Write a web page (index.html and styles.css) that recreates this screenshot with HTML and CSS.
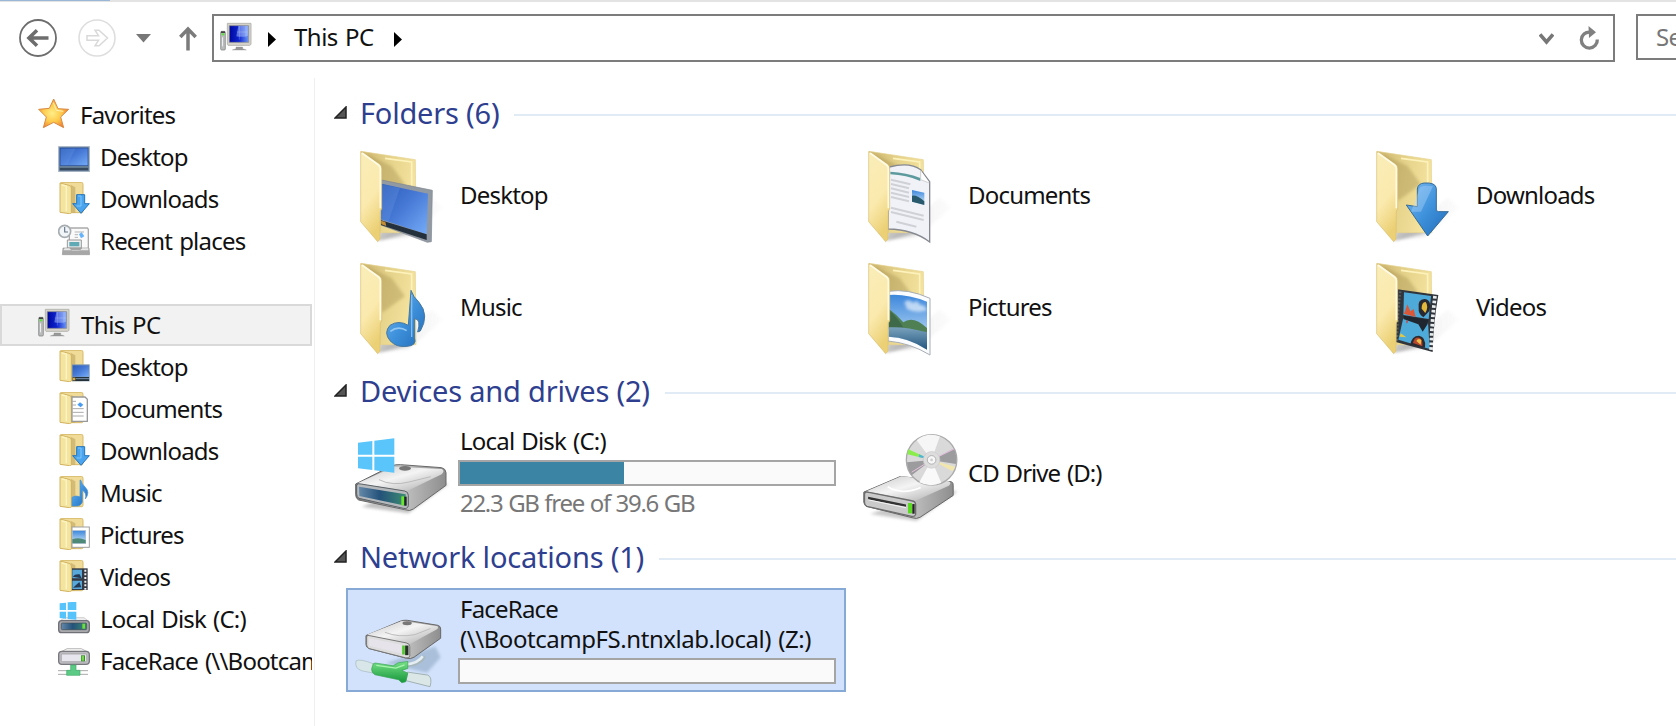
FILE: index.html
```html
<!DOCTYPE html>
<html lang="en">
<head>
<meta charset="utf-8">
<title>This PC</title>
<link rel="stylesheet" href="styles.css">
</head>
<body>
<svg class="defs" width="0" height="0" aria-hidden="true">
  <defs>
    <linearGradient id="front" x1="0" y1="0" x2="0.3" y2="1"><stop offset="0" stop-color="#f9edb8"/><stop offset=".6" stop-color="#fbeaae"/><stop offset="1" stop-color="#ebd075"/></linearGradient>
    <linearGradient id="back" x1="0" y1="0" x2="1" y2=".3"><stop offset="0" stop-color="#cdb56f"/><stop offset=".5" stop-color="#e5d28a"/><stop offset="1" stop-color="#f4e39e"/></linearGradient>
    <linearGradient id="shade" x1="0" y1="0" x2="1" y2="0"><stop offset="0" stop-color="#888" stop-opacity=".45"/><stop offset="1" stop-color="#bbb" stop-opacity="0.1"/></linearGradient>
    <linearGradient id="screen" x1="0" y1="0" x2="1" y2="1"><stop offset="0" stop-color="#2c5cb8"/><stop offset=".45" stop-color="#4577d4"/><stop offset="1" stop-color="#75acf8"/></linearGradient>
    <linearGradient id="blue" x1="0" y1="0" x2="1" y2="1"><stop offset="0" stop-color="#7cbcf0"/><stop offset=".5" stop-color="#3f92dc"/><stop offset="1" stop-color="#226bb8"/></linearGradient>
    <linearGradient id="metal" x1="0" y1="0" x2="1" y2="1"><stop offset="0" stop-color="#c6c6c6"/><stop offset=".45" stop-color="#f4f4f4"/><stop offset="1" stop-color="#a8a8a8"/></linearGradient>
    <linearGradient id="side" x1="0" y1="0" x2="1" y2="0"><stop offset="0" stop-color="#777"/><stop offset=".5" stop-color="#c4c4c4"/><stop offset="1" stop-color="#8e8e8e"/></linearGradient>
    <linearGradient id="glass" x1="0" y1="0" x2="1" y2="0"><stop offset="0" stop-color="#6488a8"/><stop offset=".45" stop-color="#24527a"/><stop offset="1" stop-color="#3c8a72"/></linearGradient>
    <linearGradient id="sky" x1="0" y1="0" x2="0" y2="1"><stop offset="0" stop-color="#3d87dc"/><stop offset="1" stop-color="#d6ecfa"/></linearGradient>
    <linearGradient id="sea" x1="0" y1="0" x2="0" y2="1"><stop offset="0" stop-color="#7aa3bd"/><stop offset="1" stop-color="#245680"/></linearGradient>
    <linearGradient id="pc" x1="0" y1="0" x2="1" y2="0"><stop offset="0" stop-color="#00089c"/><stop offset=".5" stop-color="#0d25d0"/><stop offset="1" stop-color="#6f9af4"/></linearGradient>
    <linearGradient id="cable" x1="0" y1="0" x2="0" y2="1"><stop offset="0" stop-color="#75e086"/><stop offset="1" stop-color="#16963a"/></linearGradient>
    <radialGradient id="gold" cx=".45" cy=".5" r=".55"><stop offset="0" stop-color="#ffee88"/><stop offset=".55" stop-color="#fdca4a"/><stop offset="1" stop-color="#ee8030"/></radialGradient>
    <filter id="soft" x="-30%" y="-30%" width="160%" height="160%"><feGaussianBlur stdDeviation="5"/></filter>

    <symbol id="fold-back" viewBox="84 165 300 300">
      <path d="M170 445L250 440L355 350L320 320Z" fill="url(#shade)" opacity=".45" filter="url(#soft)"/>
      <path d="M160 450L260 425L170 395Z" fill="#888" opacity=".5" filter="url(#soft)"/>
      <path d="M108 181L180 192L271 206L273 425L160 425Z" fill="url(#back)" stroke="#e6d28d" stroke-width="2"/>
      <path d="M180 202L260 213V360" fill="none" stroke="#fdf2bb" stroke-width="5"/>
      <path d="M125 190L200 225L240 280L170 330Z" fill="#8f7a38" opacity=".3" filter="url(#soft)"/>
    </symbol>
    <symbol id="fold-front" viewBox="84 165 300 300">
      <path d="M107 182L163 220Q170 224 170 232V354L166 360L165 445L158 452L107 392Z" fill="url(#front)" stroke="#d9be72" stroke-width="2"/>
      <path d="M111 186L161 222Q166 226 166 234V352" fill="none" stroke="#fffbe6" stroke-width="5"/>
    </symbol>
    <symbol id="mini-fold" viewBox="0 0 96 96">
      <path d="M8 3Q8 1 11 1H70Q75 1 75 7V88Q75 92 71 92H30L8 90Z" fill="#f0dc98" stroke="#d8b968" stroke-width="3"/>
      <path d="M38 8L52 16V92H38Z" fill="#bfa560" opacity=".6"/>
      <path d="M6 3L33 10Q40 12 40 18V93Q38 96 34 95L6 91Z" fill="#f3e5a0" stroke="#d2b462" stroke-width="3"/>
      <path d="M12 9L25 12V88" fill="none" stroke="#fcf4c4" stroke-width="4"/>
    </symbol>
    <symbol id="mini-down" viewBox="0 0 96 96">
      <use href="#mini-fold"/>
      <path d="M56 38H80V65H94L69 94L44 65H56Z" fill="#4aa5ee" stroke="#2575bc" stroke-width="3"/>
      <path d="M60 42H69V72H56" fill="none" stroke="#83c7fa" stroke-width="3"/>
    </symbol>
    <symbol id="computer" viewBox="0 0 96 96">
      <rect x="2" y="28" width="14" height="56" rx="3" fill="#b9bcbc" stroke="#777" stroke-width="2"/>
      <rect x="3" y="28" width="12" height="5" fill="#444"/><rect x="5" y="34" width="8" height="6" fill="#5be33c"/>
      <rect x="6" y="46" width="3" height="27" fill="#eee"/>
      <path d="M48 75H68V80L79 84H37L48 80Z" fill="#999" stroke="#888"/>
      <path d="M22 4H93V67L89 70H24L22 67Z" fill="#d4d2c9" stroke="#b7b7b2" stroke-width="3"/>
      <path d="M28 11H86V61H28Z" fill="url(#pc)" stroke="#8b8b88" stroke-width="2"/>
      <path d="M55 12H84V41Q66 47 49 43Z" fill="#bcd2ff" opacity=".45"/>
      <path d="M58 12V53M78 12V47M50 30H84" stroke="#e9f3ff" stroke-width="1.5" opacity=".45"/>
    </symbol>
  </defs>
</svg>

<div class="window">
  <div class="strip"><div class="strip-active"></div></div>
  <header class="toolbar">
    <svg class="nav-back" viewBox="0 0 40 40"><circle cx="20" cy="20" r="18" fill="#fff" stroke="#6d6d6d" stroke-width="1.8"/><path d="M30.500 20H12M19 12.300L11 20L19 27.700" fill="none" stroke="#6d6d6d" stroke-width="3.600"/></svg>
    <svg class="nav-forward" viewBox="0 0 40 40"><circle cx="20" cy="20" r="18" fill="#fff" stroke="#dedede" stroke-width="1.600"/><path d="M10 17.700H21.500L18 12.200H22L30.500 20L22 27.800H18L21.500 22.300H10Z" fill="#fff" stroke="#d9d9d9" stroke-width="1.500"/></svg>
    <svg class="nav-history" viewBox="0 0 15 9"><path d="M0 0H15L7.500 8.500Z" fill="#777"/></svg>
    <svg class="nav-up" viewBox="0 0 18 25"><path d="M9 24.500V3M1.300 11L9 3L16.700 11" fill="none" stroke="#7b7b7b" stroke-width="3.500"/></svg>
    <div class="address">
      <svg class="icon" viewBox="0 0 96 96"><use href="#computer"/></svg>
      <svg class="crumb" viewBox="0 0 8 15"><path d="M0 0L8 7.500L0 15Z"/></svg>
      <span class="crumb-text">This PC</span>
      <svg class="crumb" viewBox="0 0 8 15"><path d="M0 0L8 7.500L0 15Z"/></svg>
      <svg class="chevron" viewBox="0 0 15 13"><path d="M1 1.500L7.500 9L14 1.500" fill="none" stroke="#777" stroke-width="3.600"/></svg>
      <svg class="refresh" viewBox="0 0 21 25"><path d="M11 6.100A8 8 0 1 0 18.300 13.500" fill="none" stroke="#808080" stroke-width="3.300"/><path d="M9.500 0L17 6.300L10 12Z" fill="#808080"/></svg>
    </div>
    <div class="search">Search This PC</div>
  </header>

  <div class="body">
    <nav class="sidebar">
      <div class="row top"><svg class="icon" viewBox="0 0 96 96"><path d="M47 3L60 32L92 34L68 57L77 89L47 73L16 89L25 57L2 34L34 31Z" fill="url(#gold)" stroke="#d98a45" stroke-width="3" stroke-linejoin="round"/><path d="M46 14L55 37L76 40" fill="none" stroke="#fff3b8" stroke-width="3"/></svg><span>Favorites</span></div>
      <div class="row"><svg class="icon" viewBox="0 0 96 96"><rect x="2" y="20" width="92" height="75" fill="#7188a4" stroke="#a6b4c5" stroke-width="3"/><rect x="6" y="24" width="84" height="53" fill="url(#screen)" stroke="#284d91" stroke-width="2"/><path d="M8 26H52L28 76H8Z" fill="#76a8f2" opacity=".22"/><rect x="5" y="79" width="86" height="12" fill="#36495d"/><rect x="5" y="79" width="86" height="4" fill="#7891a9"/></svg><span>Desktop</span></div>
      <div class="row"><svg class="icon" viewBox="0 0 96 96"><use href="#mini-down"/></svg><span>Downloads</span></div>
      <div class="row"><svg class="icon" viewBox="0 0 96 96"><path d="M34 12H88L91 16V78H34Z" fill="#fafafa" stroke="#aaa" stroke-width="4"/><path d="M50 24H78M50 32H60M50 40H60" stroke="#b5b5b5" stroke-width="3"/><path d="M63 31L71 25L79 37L69 43Z" fill="#65b4fb"/><path d="M28 48H70V72H28Z" fill="#eee" stroke="#999" stroke-width="3"/><rect x="34" y="54" width="30" height="13" fill="#5faab5"/><path d="M15 72H93L95 92H13Z" fill="#a7a7a7" stroke="#989898" stroke-width="2"/><path d="M20 73H34L42 80H64L73 73H91V79H16Z" fill="#e8e8e8"/><circle cx="20" cy="22" r="18" fill="#f1f5f7" stroke="#a7adb0" stroke-width="5"/><path d="M20 9V24H30" fill="none" stroke="#66798a" stroke-width="3.500"/></svg><span>Recent places</span></div>

      <div class="row top selected"><svg class="icon" viewBox="0 0 96 96"><use href="#computer"/></svg><span>This PC</span></div>
      <div class="row"><svg class="icon" viewBox="0 0 96 96"><use href="#mini-fold"/><rect x="42" y="43" width="53" height="51" fill="#8298ad"/><rect x="44" y="46" width="49" height="34" fill="url(#screen)"/><rect x="44" y="81" width="49" height="12" fill="#24303a"/><path d="M44 83H52V91H44Z" fill="#dca937"/><path d="M53 86H93" stroke="#7893ac" stroke-width="3"/></svg><span>Desktop</span></div>
      <div class="row"><svg class="icon" viewBox="0 0 96 96"><use href="#mini-fold"/><path d="M42 15H81L88 22V88H42Z" fill="#fff" stroke="#999" stroke-width="4"/><path d="M43 28H54M43 39H54M43 50H77M43 61H77M43 72H77" stroke="#aaa" stroke-width="3"/><path d="M58 38L66 31L76 38L68 46Z" fill="#479bf0"/></svg><span>Documents</span></div>
      <div class="row"><svg class="icon" viewBox="0 0 96 96"><use href="#mini-down"/></svg><span>Downloads</span></div>
      <div class="row"><svg class="icon" viewBox="0 0 96 96"><use href="#mini-fold"/><path d="M68 12Q71 24 82 34Q97 49 82 69Q87 51 73 43V78Q68 92 53 90H42V64Q52 57 66 62V12Z" fill="url(#blue)" stroke="#4a91cf" stroke-width="2"/></svg><span>Music</span></div>
      <div class="row"><svg class="icon" viewBox="0 0 96 96"><use href="#mini-fold"/><rect x="42" y="27" width="52" height="61" fill="#fff" stroke="#a0a0a0" stroke-width="3"/><rect x="43" y="38" width="40" height="39" fill="url(#sky)" stroke="#abc" stroke-width="2"/><path d="M43 64Q62 56 83 66V76H43Z" fill="#4e8877"/></svg><span>Pictures</span></div>
      <div class="row"><svg class="icon" viewBox="0 0 96 96"><use href="#mini-fold"/><rect x="42" y="25" width="47" height="65" fill="#343943"/><path d="M43 29H72V55H43ZM43 62H72V87H43Z" fill="#58a9da"/><path d="M44 50Q51 41 65 43L71 55M45 83L64 66L70 82Z" fill="#253955"/><path d="M82 29V89" stroke="#f1f1f1" stroke-width="6" stroke-dasharray="6 5"/></svg><span>Videos</span></div>
      <div class="row"><svg class="icon" viewBox="0 0 96 96"><path d="M5 57L20 47H78L91 57Z" fill="#eee" stroke="#bbb" stroke-width="2"/><rect x="2" y="56" width="92" height="36" rx="9" fill="#a8a8ad" stroke="#707078" stroke-width="4"/><rect x="10" y="63" width="76" height="20" rx="3" fill="url(#glass)" stroke="#414b52" stroke-width="2"/><rect x="73" y="65" width="8" height="15" fill="#71dd38"/><path d="M5 4L24 2V24H5ZM29 1L55 -1V24H29ZM5 29H24V50L5 48ZM29 29H55V53L29 51Z" fill="#56c4fb"/></svg><span>Local Disk (C:)</span></div>
      <div class="row"><svg class="icon" viewBox="0 0 96 96"><path d="M6 25L27 14H70L91 25Z" fill="#f7f7f7" stroke="#bbb" stroke-width="3"/><rect x="2" y="22" width="92" height="39" rx="10" fill="#bcbcc1" stroke="#77777e" stroke-width="4"/><rect x="10" y="30" width="76" height="23" rx="3" fill="#e7e6ef" stroke="#999" stroke-width="2"/><rect x="69" y="34" width="12" height="18" fill="#3b8929"/><rect x="71" y="36" width="7" height="14" fill="#72d748"/><path d="M0 80H90M0 91H90" stroke="#aaa" stroke-width="3"/><path d="M38 63H54V79H66V94H26V79H38Z" fill="#5aca84" stroke="#43ad6c" stroke-width="2"/></svg><span>FaceRace (\\BootcampFS.ntnxlab.local) (Z:)</span></div>
    </nav>

    <main class="content">
      <section class="group folders">
        <h2><svg class="expander" viewBox="0 0 13 13"><path d="M12 1V12H1Z"/></svg><span>Folders (6)</span></h2>
        <div class="tiles">
          <div class="tile"><svg class="tile-icon" viewBox="84 165 300 300"><use href="#fold-back" x="84" y="165" width="300" height="300"/><path d="M170 267L322 298L319 452L307 454L168 402Z" fill="#9199a3" stroke="#7e858f" stroke-width="2"/><path d="M170 278L309 308L305 430L168 385Z" fill="url(#screen)"/><path d="M170 280L225 291L190 392L168 385Z" fill="#7aa7ee" opacity=".22"/><path d="M168 388L305 430V447L168 402Z" fill="#24303c"/><path d="M168 389L181 393L184 405L169 400Z" fill="#c58e35"/><use href="#fold-front" x="84" y="165" width="300" height="300"/></svg><span class="name">Desktop</span></div>
          <div class="tile"><svg class="tile-icon" viewBox="84 165 300 300"><use href="#fold-back" x="84" y="165" width="300" height="300"/><path d="M169 228Q230 212 263 236L290 272V453Q240 415 165 414Z" fill="#f1f2f8" stroke="#868990" stroke-width="4"/><path d="M172 242Q220 244 262 261V270Q220 252 172 250Z" fill="#5d9a9d"/><path d="M263 238V266L289 276" fill="#fff" stroke="#bbb" stroke-width="2"/><path d="M174 266L232 280M174 279L228 292M174 292L228 305M174 305L228 318M174 318L228 331M174 350L272 374M174 363L272 387M190 392L250 407" stroke="#cfd1d7" stroke-width="6"/><path d="M237 297L274 305V342L237 332Z" fill="url(#sky)"/><path d="M237 314Q252 311 274 331V342L237 332Z" fill="#28596d"/><use href="#fold-front" x="84" y="165" width="300" height="300"/></svg><span class="name">Documents</span></div>
          <div class="tile"><svg class="tile-icon" viewBox="84 165 300 300"><use href="#fold-back" x="84" y="165" width="300" height="300"/><path d="M229 280Q231 263 250 262Q284 260 286 278V345L293 348H322L260 421L196 328L229 333Z" fill="url(#blue)" stroke="#356b98" stroke-width="3" transform="translate(0 14)"/><path d="M235 294Q240 280 276 286L240 362H210" fill="#b9dcff" opacity=".35"/><use href="#fold-front" x="84" y="165" width="300" height="300"/></svg><span class="name">Downloads</span></div>
          <div class="tile"><svg class="tile-icon" viewBox="84 165 300 300"><use href="#fold-back" x="84" y="165" width="300" height="300"/><path d="M258 262Q264 281 282 298Q314 336 286 384L278 387Q289 348 269 347V405Q276 428 246 430Q214 434 195 413Q175 389 195 367Q221 350 250 367Z" fill="url(#blue)" stroke="#47779e" stroke-width="3"/><path d="M260 275V402" stroke="#83bbea" stroke-width="4"/><path d="M196 385Q220 367 245 383" fill="none" stroke="#92c8f2" stroke-width="5"/><use href="#fold-front" x="84" y="165" width="300" height="300"/></svg><span class="name">Music</span></div>
          <div class="tile"><svg class="tile-icon" viewBox="84 165 300 300"><use href="#fold-back" x="84" y="165" width="300" height="300"/><path d="M166 265Q225 256 291 286V456Q232 420 165 414Z" fill="#fafcff" stroke="#a8adb4" stroke-width="3"/><path d="M168 276Q220 272 282 296V440Q228 404 167 401Z" fill="url(#sky)"/><path d="M214 298Q227 285 240 300Q252 287 261 306Q276 305 281 322Q250 332 222 318Z" fill="#fff" opacity=".6" filter="url(#soft)"/><path d="M168 318Q190 334 211 358Q240 336 282 375V391L167 378Z" fill="#4f8054"/><path d="M167 320Q196 345 215 380L167 376Z" fill="#3f6a4a"/><path d="M167 373Q218 370 282 388V440Q226 403 167 401Z" fill="url(#sea)"/><use href="#fold-front" x="84" y="165" width="300" height="300"/></svg><span class="name">Pictures</span></div>
          <div class="tile"><svg class="tile-icon" viewBox="84 165 300 300"><use href="#fold-back" x="84" y="165" width="300" height="300"/><path d="M169 259L292 276Q277 360 275 447L164 417Z" fill="#30343b"/><path d="M189 268L270 279L263 348L187 336ZM187 344L261 358L266 438L172 410Z" fill="#4eabd9"/><path d="M282 279Q272 360 270 445" fill="none" stroke="#e9ecec" stroke-width="11" stroke-dasharray="8 6"/><path d="M178 265Q170 330 168 416" fill="none" stroke="#555d5d" stroke-width="7" stroke-dasharray="6 5"/><path d="M233 315Q229 290 250 288Q274 290 265 324L247 343Q231 333 233 315Z" fill="#292a31"/><path d="M242 317Q242 296 254 297Q264 310 253 330Z" fill="#e2b93b"/><path d="M191 328L199 304L208 325L218 318L224 342L188 332Z" fill="#dc5737"/><path d="M188 338L262 350L260 363L245 386L232 364L187 348Z" fill="#20262f"/><path d="M195 350L201 356L197 362Z" fill="#d33d2e"/><path d="M208 425Q212 398 234 398Q256 402 252 434Z" fill="#2c2a2e"/><path d="M216 420Q220 402 234 404Q246 408 244 430Z" fill="#b74830"/><path d="M226 414Q231 404 241 411L239 425Z" fill="#edc14a"/><path d="M179 391L196 403L176 401Z" fill="#e4c944"/><use href="#fold-front" x="84" y="165" width="300" height="300"/></svg><span class="name">Videos</span></div>
        </div>
      </section>

      <section class="group devices">
        <h2><svg class="expander" viewBox="0 0 13 13"><path d="M12 1V12H1Z"/></svg><span>Devices and drives (2)</span></h2>
        <div class="tiles">
          <div class="tile"><svg class="drive-icon" viewBox="75 190 315 255"><path d="M110 408L250 428L370 340L300 330Z" fill="#777" opacity=".45" filter="url(#soft)"/><path d="M92 340L199 286Q212 281 226 282L350 291Q362 294 363 306V344L265 415Q255 423 239 417L101 388Q92 383 92 372Z" fill="url(#side)" stroke="#686868" stroke-width="3"/><path d="M99 337L207 288L350 295Q361 300 350 311L251 359Q243 363 232 358L104 340Z" fill="url(#metal)"/><path d="M95 343Q98 337 108 340L239 361Q250 363 250 374V405Q248 416 235 413L102 383Q95 379 95 370Z" fill="#b6b9bc" stroke="#5c6267" stroke-width="3"/><path d="M102 348L242 371V405L103 376Z" fill="url(#glass)"/><rect x="229" y="377" width="8" height="27" fill="#69e72c"/><rect x="238" y="378" width="7" height="27" fill="#1d271f"/><path d="M162 327Q202 347 252 334L317 318" fill="none" stroke="#bbb" stroke-width="3"/><ellipse cx="240" cy="293" rx="18" ry="7" fill="#777"/><path d="M99 216L142 211V252H99ZM148 210L208 203V252H148ZM99 258H142V298L99 293ZM148 258H208V306L148 299Z" fill="#59c5fa"/></svg><div class="info"><span class="name">Local Disk (C:)</span><div class="bar"><div class="bar-fill"></div></div><span class="free">22.3 GB free of 39.6 GB</span></div></div>
          <div class="tile"><svg class="cd-icon" viewBox="60 180 300 280"><path d="M90 430L230 451L353 362L300 355Z" fill="#777" opacity=".4" filter="url(#soft)"/><path d="M71 364L181 317L335 333Q341 336 340 345V374L240 440Q230 446 216 441L80 407Q71 402 71 394Z" fill="url(#side)" stroke="#666" stroke-width="3"/><path d="M77 362L184 316L326 331Q337 335 327 345L228 389Q220 392 210 387Z" fill="url(#metal)"/><path d="M73 369Q75 361 87 365L215 390Q227 392 227 402V431Q224 440 212 436L80 407Q73 403 73 395Z" fill="#cacaca" stroke="#6d6d6d" stroke-width="4"/><path d="M84 378L198 401V408L84 386Z" fill="#333"/><path d="M84 387L198 411" stroke="#f5f5f5" stroke-width="3"/><rect x="204" y="397" width="12" height="31" fill="#59db20"/><rect x="217" y="400" width="7" height="29" fill="#222"/><path d="M143 348Q185 374 242 350" fill="none" stroke="#fff" stroke-width="5"/><circle cx="275" cy="267" r="76" fill="#d9d9da" stroke="#aaa" stroke-width="4"/><path d="M275 267L230 208A74 74 0 0 1 300 196Z" fill="#f6f6f6"/><path d="M275 267L238 334A76 76 0 0 0 304 336Z" fill="#f9f9f9"/><path d="M275 267L201 274A74 74 0 0 0 215 313ZM275 267L342 233A74 74 0 0 1 348 279Z" fill="#9c9c9e"/><path d="M275 267L205 235A74 74 0 0 0 202 250Z" fill="#8bed4c"/><path d="M275 267L238 250L236 258Z" fill="#4fb5d8"/><path d="M275 267L338 301A74 74 0 0 0 346 288Z" fill="#f1e6ae"/><path d="M275 267L215 304M275 267L343 234" stroke="#e7c0df" stroke-width="3"/><circle cx="275" cy="267" r="25" fill="#ddd" stroke="#c8c8c8" stroke-width="2"/><circle cx="275" cy="267" r="13" fill="#f7f7f7" stroke="#b0b0b0" stroke-width="3"/><circle cx="275" cy="267" r="4" fill="#ccc"/></svg><span class="name cd">CD Drive (D:)</span></div>
        </div>
      </section>

      <section class="group network">
        <h2><svg class="expander" viewBox="0 0 13 13"><path d="M12 1V12H1Z"/></svg><span>Network locations (1)</span></h2>
        <div class="tiles">
          <div class="tile active"><svg class="net-icon" viewBox="80 255 290 232"><path d="M180 400L305 429L346 382L330 350Z" fill="#94adc8" opacity=".65" filter="url(#soft)"/><path d="M121 317L226 273Q235 270 245 271L337 286Q346 288 346 297V325L266 382Q257 389 242 385L130 356Q121 352 121 344Z" fill="url(#side)" stroke="#686868" stroke-width="3"/><path d="M127 313L229 273L334 288Q342 291 335 298L254 342Q247 345 239 341L131 319Z" fill="url(#metal)"/><path d="M123 320Q125 314 136 318L242 339Q253 341 253 350V378Q252 387 240 384L130 356Q123 352 123 345Z" fill="#ddd" stroke="#777" stroke-width="3"/><path d="M130 325L228 345V371L130 348Z" fill="#e7e3eb"/><rect x="230" y="347" width="8" height="27" fill="#51c92c"/><rect x="239" y="347" width="10" height="29" fill="#263126"/><path d="M178 307Q219 324 269 314L315 296" fill="none" stroke="#bbb" stroke-width="3"/><ellipse cx="245" cy="280" rx="14" ry="6" fill="#777"/><path d="M241 406Q287 402 295 379" fill="none" stroke="#a9b8bd" stroke-width="13"/><path d="M241 404Q278 400 292 379" fill="none" stroke="#e5eff3" stroke-width="8"/><path d="M91 393Q104 386 143 402V430L108 423Q86 416 91 393Z" fill="#d9e6e9" stroke="#a4b7bb" stroke-width="2"/><path d="M246 427L307 436Q322 442 314 471L242 453Z" fill="#dbe6e6" stroke="#9fb1b1" stroke-width="3"/><path d="M143 402Q146 398 158 401L203 408L218 399L247 395V416L229 422L247 430L241 456L229 459L219 450L148 435Q137 429 138 417Z" fill="url(#cable)" stroke="#36a253" stroke-width="2"/><path d="M152 407L211 415L237 405" fill="none" stroke="#a9f5af" stroke-width="4"/></svg><div class="info"><span class="name">FaceRace</span><span class="name path">(\\BootcampFS.ntnxlab.local) (Z:)</span><div class="bar"></div></div></div>
        </div>
      </section>
    </main>
  </div>
</div>
</body>
</html>
```
FILE: styles.css
```css
* { box-sizing: border-box; }

body {
  margin: 0;
  overflow: hidden;
  background: #fff;
  color: #111;
  font: 24px/30px "Noto Sans", "Open Sans", sans-serif;
  letter-spacing: -0.8px;
  word-spacing: 1.5px;
}

svg { display: block; flex: none; }
.defs { position: absolute; }
.icon { width: 32px; height: 32px; }

.window { height: 726px; display: flex; flex-direction: column; }
.strip { height: 2px; background: #e3e3e3; flex: none; }
.strip-active { width: 110px; height: 1px; background: #9ab7d8; }

.toolbar {
  height: 76px;
  flex: none;
  display: flex;
  align-items: flex-start;
  padding: 12px 0 0 17px;
  overflow: hidden;
}
.nav-back, .nav-forward { width: 40px; height: 40px; margin-top: 4px; }
.nav-back { margin-left: 0.5px; }
.nav-forward { margin-left: 19.5px; }
.nav-history { width: 15px; height: 9px; margin: 20px 0 0 19px; }
.nav-up { width: 18px; height: 25px; margin: 12px 0 0 28px; }
.address {
  display: flex;
  align-items: center;
  width: 1403px;
  height: 48px;
  flex: none;
  margin-left: 15px;
  border: 2px solid #7c7c7c;
  padding-left: 6px;
}
.crumb { width: 8px; height: 15px; margin-left: 16px; margin-top: 3px; }
.crumb-text { margin-left: 18px; margin-top: -2px; width: 82px; white-space: nowrap; letter-spacing: -0.5px; }
.crumb-text + .crumb { margin-left: 18px; }
.chevron { width: 15px; height: 13px; margin-left: auto; margin-top: 3px; }
.refresh { width: 21px; height: 25px; margin: 0 13px 0 25px; }
.search {
  width: 220px;
  height: 46px;
  flex: none;
  margin-left: 21px;
  border: 2px solid #7c7c7c;
  padding: 6px 0 0 18px;
  color: #777;
  white-space: nowrap;
}

.body { display: flex; flex: 1; min-height: 0; }
.sidebar {
  width: 315px;
  flex: none;
  padding: 16px 2px 0 0;
  border-right: 1px solid #f0f0f0;
}
.row {
  height: 42px;
  display: flex;
  align-items: center;
  gap: 10px;
  padding-left: 58px;
  white-space: nowrap;
  overflow: hidden;
}
.row .icon { margin-top: -2px; }
.row.top { padding-left: 38px; }
.row.selected {
  margin-top: 42px;
  border: 2px solid #d9d9d9;
  background: #f2f2f2;
  padding-left: 36px;
  gap: 11px;
  letter-spacing: -0.5px;
}

.content { flex: 1; min-width: 0; overflow: hidden; padding: 16px 0 0 18px; }
h2 {
  height: 38px;
  margin: 0 0 10px;
  padding-left: 1px;
  display: flex;
  align-items: center;
  color: #2f3f90;
  font-size: 29px;
  line-height: 38px;
  font-weight: 370;
  letter-spacing: -0.2px;
  word-spacing: 0;
  white-space: nowrap;
}
h2::after { content: ""; height: 2px; flex: 1; margin: 4px 0 0 15px; background: #e1ebf6; }
.expander { width: 13px; height: 13px; margin: -2px 13px 0 0; }
.expander path { fill: #555; stroke: #222; stroke-width: 1.5; }
.tiles {
  display: grid;
  grid-template-columns: repeat(3, 500px);
  gap: 5px 8px;
  margin-left: 13px;
}
.tile { height: 107px; display: flex; align-items: center; padding-left: 7px; }
.tile-icon { width: 100px; height: 100px; margin: 0 7px 0 0; }
.name { display: block; white-space: nowrap; }
.tile > .name { margin-top: -2px; }
.tile > .cd { letter-spacing: -0.95px; }
.devices { margin-top: 11px; }
.network { margin-top: 11px; }
.network h2 { margin-bottom: 12px; }
.drive-icon { width: 105px; height: 85px; margin: 5px 4px 0 -3px; }
.cd-icon { width: 100px; height: 93px; margin: 7px 8px 0 -1px; }
.net-icon { width: 97px; height: 77px; margin: 25px 10px 0 -3px; }
.info { width: 380px; margin-bottom: 3px; }
.info .name, .free { margin-left: 1px; }
.info .path { letter-spacing: -0.45px; }
.bar {
  height: 26px;
  width: 378px;
  margin: 4px 0 2px -1px;
  border: 2px solid #a5a5a5;
  background: #fafafa;
}
.bar-fill { width: 164px; height: 100%; background: #3c84a4; }
.free { display: block; color: #777; letter-spacing: -1.3px; word-spacing: 0.8px; }
.tile.active {
  height: 104px;
  border: 2px solid #86a9d5;
  background: #d2e2fc;
  align-items: flex-start;
}
.active .info { padding-top: 4px; }
```
